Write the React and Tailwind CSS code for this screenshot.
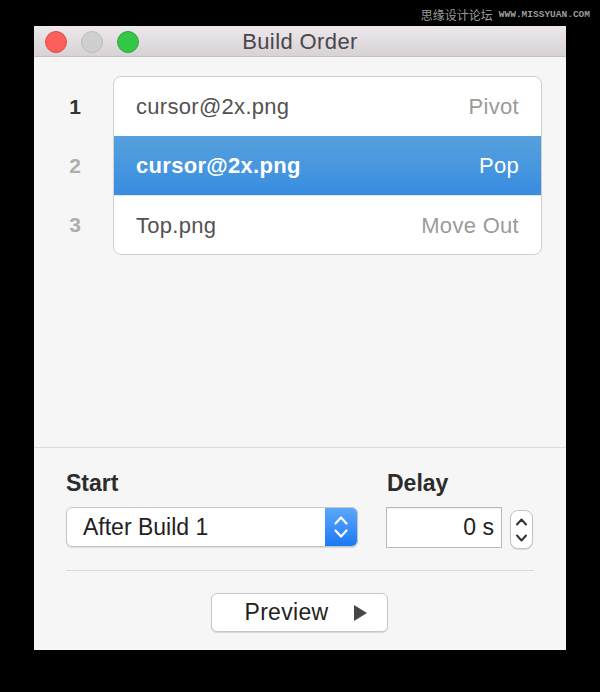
const rows = [
  { n: 1, file: 'cursor@2x.png', action: 'Pivot' },
  { n: 2, file: 'cursor@2x.png', action: 'Pop', selected: true },
  { n: 3, file: 'Top.png', action: 'Move Out' },
];

function SelectChevrons() {
  return (
    <svg width="16" height="26" viewBox="0 0 16 26" fill="none">
      <path d="M2.5 9.5 L8 3.5 L13.5 9.5" stroke="currentColor" strokeWidth="2.2" strokeLinecap="round" strokeLinejoin="round" />
      <path d="M2.5 16.5 L8 22.5 L13.5 16.5" stroke="currentColor" strokeWidth="2.2" strokeLinecap="round" strokeLinejoin="round" />
    </svg>
  );
}

function StepperChevrons() {
  return (
    <svg width="13" height="28" viewBox="0 0 13 28" fill="none">
      <path d="M2 8.5 L6.5 3.5 L11 8.5" stroke="currentColor" strokeWidth="2" strokeLinecap="round" strokeLinejoin="round" />
      <path d="M2 19.5 L6.5 24.5 L11 19.5" stroke="currentColor" strokeWidth="2" strokeLinecap="round" strokeLinejoin="round" />
    </svg>
  );
}

export default function App() {
  return (
    <div className="relative w-[600px] h-[692px] bg-black pt-[26px] pl-[34px] font-['Liberation_Sans',Arial,sans-serif]">
      <div className="absolute top-[7px] right-[10px] flex items-center gap-[6px] text-[#9c9c9c]">
        <span className="text-[12px] leading-[16px] font-['Noto_Sans_CJK_SC',sans-serif]">思缘设计论坛</span>
        <span className="text-[9.5px] leading-[16px] font-bold font-['Liberation_Mono',monospace]">WWW.MISSYUAN.COM</span>
      </div>

      <div className="w-[532px] h-[624px] bg-[#f6f6f6] flex flex-col overflow-hidden">
        {/* title bar */}
        <div className="h-[31px] shrink-0 grid grid-cols-[1fr_auto_1fr] items-center border-b border-[#c6c1c5] bg-gradient-to-b from-[#ece8eb] to-[#d6d2d5]">
          <div className="flex items-center gap-[14px] pl-[11px]">
            <span className="w-[22px] h-[22px] rounded-full bg-[#fc605c] border border-[#de4a45]" />
            <span className="w-[22px] h-[22px] rounded-full bg-[#d0cfd0] border border-[#bcbbbc]" />
            <span className="w-[22px] h-[22px] rounded-full bg-[#34c84a] border border-[#27a937]" />
          </div>
          <span className="text-[22px] leading-[31px] text-[#4b464a] tracking-[0.4px]">Build Order</span>
          <div />
        </div>

        {/* build list */}
        <div className="h-[391px] shrink-0 border-b border-[#dcdcdc] flex pt-[19px] pr-[24px]">
          <div className="w-[79px] shrink-0 pt-[1px] pl-[3px]">
            {rows.map(r => (
              <div
                key={r.n}
                className={`h-[59px] flex items-center justify-center text-[21px] font-bold ${r.n === 1 ? 'text-[#333]' : 'text-[#adadad]'}`}
              >
                {r.n}
              </div>
            ))}
          </div>
          <div className="flex-1 self-start bg-white border border-[#d0d0d0] rounded-[8px] overflow-hidden">
            {rows.map(r => (
              <div
                key={r.n}
                className={
                  r.selected
                    ? 'h-[59px] flex items-center justify-between px-[22px] text-[22px] tracking-[0.3px] text-white bg-gradient-to-b from-[#56a0dc] to-[#388de1]'
                    : `h-[59px] flex items-center justify-between px-[22px] text-[22px] tracking-[0.3px] ${r.n === 3 ? 'border-t border-[#e3e3e3]' : ''}`
                }
              >
                <span className={r.selected ? 'font-bold' : 'text-[#555153]'}>{r.file}</span>
                <span className={r.selected ? '' : 'text-[#9b9b9b]'}>{r.action}</span>
              </div>
            ))}
          </div>
        </div>

        {/* options */}
        <div className="flex-1 px-[32px] pt-[21px] pb-[20px] flex flex-col">
          <div className="flex gap-[28px]">
            <div className="w-[292px] flex flex-col gap-[10px]">
              <span className="text-[23px] leading-[28px] font-bold text-[#2c2c2c]">Start</span>
              <div className="h-[40px] flex rounded-[6px] border border-[#c6c6c6] bg-white shadow-[0_1px_1px_rgba(0,0,0,0.12)] overflow-hidden">
                <span className="flex-1 pl-[16px] text-[23px] leading-[38px] text-[#222]">After Build 1</span>
                <span className="w-[32px] flex items-center justify-center text-white bg-gradient-to-b from-[#5aa8fb] to-[#1a79f5]">
                  <SelectChevrons />
                </span>
              </div>
            </div>
            <div className="flex flex-col gap-[10px]">
              <span className="text-[23px] leading-[28px] font-bold text-[#2c2c2c] pl-[1px]">Delay</span>
              <div className="flex gap-[8px]">
                <div className="w-[116px] h-[41px] border border-[#bababa] bg-white shadow-[inset_0_1px_1px_rgba(0,0,0,0.06)] text-right pr-[7px] text-[23px] leading-[39px] text-[#222]">
                  0 s
                </div>
                <div className="mt-[3px] w-[23px] h-[39px] rounded-[8px] border border-[#c4c4c4] bg-white shadow-[0_1px_1px_rgba(0,0,0,0.12)] flex items-center justify-center text-[#333]">
                  <StepperChevrons />
                </div>
              </div>
            </div>
          </div>

          <div className="mt-[21px] h-px bg-[#dadada]" />

          <div className="mt-[22px] flex justify-center">
            <button className="ml-[-2px] w-[177px] h-[39px] flex items-center justify-between pl-[33px] pr-[20px] rounded-[6px] border border-[#c8c8c8] bg-white shadow-[0_1px_1px_rgba(0,0,0,0.13)] text-[23px] tracking-[0.3px] text-[#222]">
              <span>Preview</span>
              <svg width="13" height="16" viewBox="0 0 13 16">
                <path d="M0 0 L13 8 L0 16 Z" fill="#464646" />
              </svg>
            </button>
          </div>
        </div>
      </div>
    </div>
  );
}
